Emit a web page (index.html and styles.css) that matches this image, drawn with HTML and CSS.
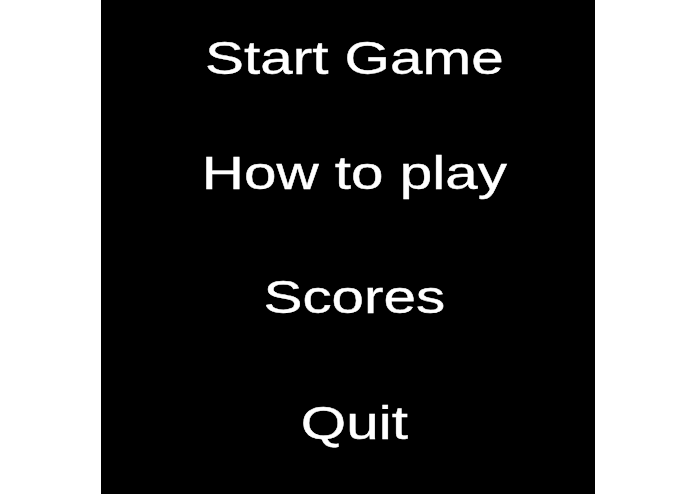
FILE: index.html
```html
<!DOCTYPE html>
<html lang="en">
<head>
  <meta charset="UTF-8" />
  <meta name="viewport" content="width=device-width, initial-scale=1.0"/>
  <title>Menu</title>
  <link rel="stylesheet" href="styles.css">
</head>
<body>

  <!-- Main Menu -->
  <div class="menu" id="menu">
    <div class="menu-item start">Start Game</div>
    <div class="menu-item how">How to play</div>
    <div class="menu-item scores">Scores</div>
    <div class="menu-item quit">Quit</div>
  </div>

</body>
</html>
```

FILE: styles.css
```css
body {
  margin: 0;
  background: white;
  font-family: "Liberation Sans", Arial, sans-serif;
}

.menu {
  width: 494px;
  height: 494px;
  margin: 0 auto;
  padding-top: 35px;
  box-sizing: border-box;
  background: #000;
  display: flex;
  flex-direction: column;
}

.menu-item {
  color: #fff;
  font-size: 46px;
  line-height: 46px;
  text-align: center;
  padding-left: 10px;
  transform: scaleX(1.27);
  -webkit-text-stroke: 0.4px #fff;
  cursor: pointer;
}

.menu-item.how {
  margin-top: 69px;
}

.menu-item.scores {
  margin-top: 78px;
}

.menu-item.quit {
  margin-top: 80px;
}
```
